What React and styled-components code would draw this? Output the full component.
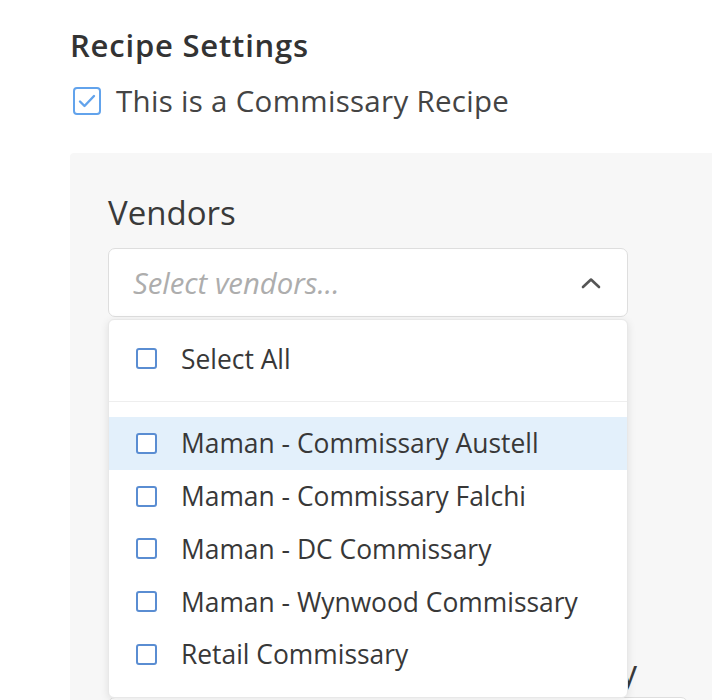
import React from 'react';
import styled, { createGlobalStyle } from 'styled-components';

const vendors = [
    { id: 1, name: 'Maman - Commissary Austell', active: true },
    { id: 2, name: 'Maman - Commissary Falchi' },
    { id: 3, name: 'Maman - DC Commissary' },
    { id: 4, name: 'Maman - Wynwood Commissary' },
    { id: 5, name: 'Retail Commissary' },
];

const GlobalStyle = createGlobalStyle`
    html, body {
        margin: 0;
        padding: 0;
        background: #ffffff;
        font-family: "Open Sans", "Noto Sans", sans-serif;
        overflow: hidden;
    }
`;

const Page = styled.div`
    width: 712px;
    height: 700px;
    overflow: hidden;
    padding: 28px 0 0 70px;
    box-sizing: border-box;
`;

const Heading = styled.h2`
    margin: 0;
    font-size: 31px;
    line-height: 34px;
    font-weight: 600;
    letter-spacing: 0.8px;
    color: #333333;
`;

const CheckRow = styled.label`
    display: flex;
    align-items: center;
    gap: 15px;
    height: 30px;
    margin-top: 24px;
    font-size: 29.5px;
    line-height: 30px;
    letter-spacing: 0.3px;
    color: #444444;
`;

const BigCheck = styled.span`
    width: 28px;
    height: 28px;
    box-sizing: border-box;
    border: 2.5px solid #62a3ec;
    border-radius: 4px;
    margin-left: 3px;
    display: flex;
    align-items: center;
    justify-content: center;
    background: #ffffff;
`;

const Panel = styled.section`
    margin-top: 37px;
    background: #f7f7f7;
    border-radius: 4px 0 0 0;
    padding: 41px 0 40px 38px;
    min-height: 600px;
`;

const FieldLabel = styled.div`
    font-size: 33px;
    line-height: 38px;
    font-weight: 500;
    color: #3a3a3a;
    white-space: nowrap;
    justify-self: ${(p) => p.$justify || 'start'};
    margin-right: ${(p) => p.$inset || 0}px;
`;

const SelectWrap = styled.div`
    position: relative;
    width: 520px;
    margin-top: 16px;
`;

const SelectBox = styled.div`
    height: 69px;
    box-sizing: border-box;
    border: 1px solid #dedede;
    border-radius: 7px;
    background: #ffffff;
    display: flex;
    align-items: center;
    justify-content: space-between;
    padding: 0 26px 0 24px;
`;

const Placeholder = styled.span`
    font-style: italic;
    font-size: 29.3px;
    color: #adadad;
`;

const Menu = styled.div`
    position: absolute;
    top: calc(100% + 2px);
    left: 0;
    right: 0;
    z-index: 2;
    background: #ffffff;
    border: 1px solid #e8e8e8;
    border-radius: 6px;
    box-shadow: 0 2px 8px rgba(0, 0, 0, 0.1);
`;

const MenuHead = styled.div`
    padding: 12px 0 16px;
    border-bottom: 1px solid #eeeeee;
`;

const MenuList = styled.div`
    padding: 15px 0 16px;
`;

const Option = styled.div`
    height: ${(p) => (p.$tall ? 53 : 52.75)}px;
    display: flex;
    align-items: center;
    gap: 24px;
    padding-left: 27px;
    font-size: 26.4px;
    color: #383838;
    background: ${(p) => (p.$active ? '#e3f0fb' : 'transparent')};
`;

const SmallCheck = styled.span`
    width: 21px;
    height: 21px;
    box-sizing: border-box;
    border: 2px solid #5a8dd2;
    border-radius: 3px;
    background: #ffffff;
    flex-shrink: 0;
`;

const Row = styled.div`
    display: grid;
    grid-template-columns: 580px;
    row-gap: 6px;
    margin-top: 336px;
`;

const Input = styled.div`
    height: 69px;
    box-sizing: border-box;
    border: 1px solid #dedede;
    border-radius: 7px;
    background: #ffffff;
`;

const App = () => {
    return (
        <Page>
            <GlobalStyle />
            <Heading>Recipe Settings</Heading>
            <CheckRow>
                <BigCheck>
                    <svg width="18" height="14" viewBox="0 0 18 14">
                        <path d="M2 7.5 L6.5 12 L16 2" fill="none" stroke="#62a3ec" strokeWidth="2.4" strokeLinecap="round" strokeLinejoin="round" />
                    </svg>
                </BigCheck>
                This is a Commissary Recipe
            </CheckRow>
            <Panel>
                <FieldLabel>Vendors</FieldLabel>
                <SelectWrap>
                    <SelectBox>
                        <Placeholder>Select vendors...</Placeholder>
                        <svg width="20" height="12" viewBox="0 0 20 12">
                            <path d="M2 10 L10 2.5 L18 10" fill="none" stroke="#555555" strokeWidth="2.6" strokeLinecap="round" strokeLinejoin="round" />
                        </svg>
                    </SelectBox>
                    <Menu>
                        <MenuHead>
                            <Option $tall>
                                <SmallCheck />
                                Select All
                            </Option>
                        </MenuHead>
                        <MenuList>
                            {vendors.map((v) => (
                                <Option key={v.id} $active={v.active}>
                                    <SmallCheck />
                                    {v.name}
                                </Option>
                            ))}
                        </MenuList>
                    </Menu>
                </SelectWrap>
                <Row>
                    <FieldLabel $justify="end" $inset={51}>Default Quantity</FieldLabel>
                    <Input />
                </Row>
            </Panel>
        </Page>
    );
};

export default App;
